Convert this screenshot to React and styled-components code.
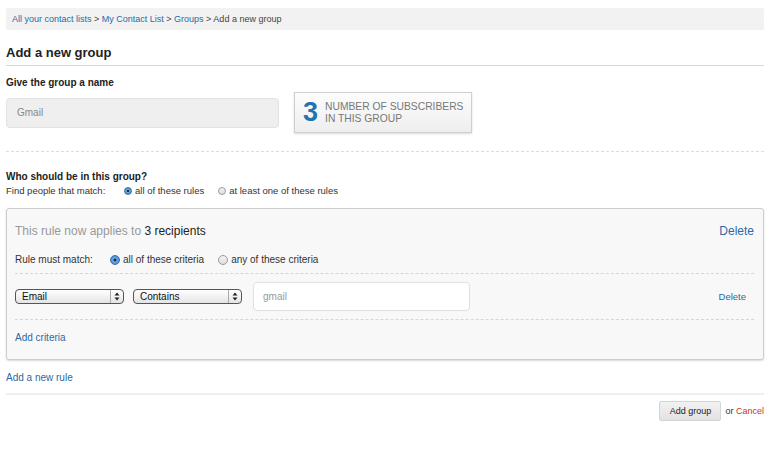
import React from "react";
import styled, { createGlobalStyle } from "styled-components";

const Global = createGlobalStyle`
  html, body { margin: 0; padding: 0; background: #fff; }
  body { font-family: "Liberation Sans", Arial, Helvetica, sans-serif; color: #222; }
`;

const Page = styled.div`
  padding: 8px 11px 0 6px;
`;

const Breadcrumb = styled.div`
  background: #f2f2f2;
  height: 22px;
  display: flex;
  align-items: center;
  padding-left: 6px;
  font-size: 9px;
  color: #444;
  border-radius: 2px;
`;

const Link = styled.a`
  color: ${(p) => (p.$danger ? "#c8342a" : "#2b6aa6")};
  text-decoration: none;
  font-size: ${(p) => p.$size || "inherit"};
  cursor: pointer;
`;

const Heading = styled.h1`
  margin: 15px 0 0;
  font-size: 13px;
  font-weight: bold;
  padding-bottom: 4px;
  border-bottom: 1px solid #d8d8d8;
  line-height: 16px;
`;

const Label = styled.div`
  font-size: 10px;
  font-weight: bold;
  margin-top: ${(p) => p.$mt || "0"};
  line-height: 12px;
`;

const NameRow = styled.div`
  display: flex;
  align-items: center;
  gap: 15px;
  margin-top: 3px;
`;

const NameInput = styled.div`
  width: 273px;
  height: 30px;
  box-sizing: border-box;
  background: #efefef;
  border: 1px solid #e2e2e2;
  border-radius: 4px;
  display: flex;
  align-items: center;
  padding-left: 10px;
  font-size: 10px;
  color: #888;
`;

const CountBox = styled.div`
  width: 178px;
  height: 41px;
  box-sizing: border-box;
  border: 1px solid #cfcfcf;
  background: linear-gradient(#fdfdfd, #eeeeee);
  box-shadow: 0 1px 2px rgba(0, 0, 0, 0.15);
  display: flex;
  align-items: center;
  padding-left: 8px;
  gap: 7px;
`;

const CountNum = styled.span`
  font-size: 27px;
  font-weight: bold;
  color: #1f74b2;
  line-height: 1;
`;

const CountText = styled.span`
  font-size: 10.3px;
  color: #777;
  text-transform: uppercase;
  line-height: 11.5px;
`;

const Dashed = styled.div`
  border-top: 1px dashed ${(p) => p.$color || "#d6d6d6"};
  margin: ${(p) => p.$m || "0"};
`;

const MatchRow = styled.div`
  display: flex;
  align-items: center;
  font-size: ${(p) => p.$size || "9.5px"};
  color: #333;
  margin-top: ${(p) => p.$mt || "0"};
  line-height: 12px;
`;

const MatchLabel = styled.span`
  width: ${(p) => p.$w};
`;

const RadioOption = styled.label`
  display: inline-flex;
  align-items: center;
  gap: 3px;
  margin-right: ${(p) => p.$mr || "0"};
`;

const RadioDot = styled.span`
  width: ${(p) => p.$s}px;
  height: ${(p) => p.$s}px;
  box-sizing: border-box;
  border-radius: 50%;
  border: 1px solid ${(p) => (p.$on ? "#3b6fa8" : "#9a9a9a")};
  background: ${(p) =>
    p.$on
      ? "radial-gradient(circle, #1d2a3a 0 22%, #6aa7e0 30%, #3c83cf 100%)"
      : "linear-gradient(#f4f4f4, #dedede)"};
  display: inline-block;
`;

const RuleBox = styled.div`
  margin-top: 11px;
  background: #f8f8f8;
  border: 1px solid #cdcdcd;
  border-radius: 3px;
  box-shadow: 0 1px 2px rgba(0, 0, 0, 0.15);
  padding: 0 9px 0 8px;
`;

const RuleHead = styled.div`
  display: flex;
  justify-content: space-between;
  align-items: center;
  height: 22px;
  margin-top: 11px;
  font-size: 12px;
`;

const Muted = styled.span`
  color: #999;
`;

const Strong = styled.span`
  color: #222;
`;

const CriteriaRow = styled.div`
  display: flex;
  align-items: center;
  height: 45px;
`;

const Select = styled.div`
  width: 109px;
  height: 15px;
  box-sizing: border-box;
  border: 1px solid #555;
  border-radius: 4px;
  background: linear-gradient(#ffffff, #e4e4e4);
  display: flex;
  align-items: center;
  font-size: 10px;
  color: #111;
  margin-right: ${(p) => p.$mr || "0"};
  overflow: hidden;
`;

const SelectText = styled.span`
  flex: 1;
  padding-left: 6px;
`;

const SelectArrows = styled.span`
  width: 12px;
  height: 100%;
  border-left: 1px solid #aaa;
  display: flex;
  align-items: center;
  justify-content: center;
`;

const ValueInput = styled.div`
  width: 217px;
  height: 29px;
  box-sizing: border-box;
  background: #fff;
  border: 1px solid #e0e0e0;
  border-radius: 4px;
  display: flex;
  align-items: center;
  padding-left: 9px;
  font-size: 10px;
  color: #999;
`;

const Spacer = styled.div`
  flex: 1;
`;

const SmallDelete = styled(Link)`
  font-size: 9.5px;
  margin-right: 8px;
`;

const AddCriteria = styled.div`
  height: 35px;
  padding-bottom: 4px;
  display: flex;
  align-items: center;
  font-size: 10px;
`;

const AddRule = styled.div`
  margin-top: 12px;
  font-size: 10px;
  line-height: 12px;
`;

const Footer = styled.div`
  margin-top: 9px;
  border-top: 2px solid #efefef;
  display: flex;
  justify-content: flex-end;
  align-items: center;
  padding-top: 6px;
  gap: 4px;
  font-size: 9px;
  color: #333;
`;

const Button = styled.button`
  width: 62px;
  height: 20px;
  font-family: inherit;
  font-size: 9px;
  color: #222;
  background: linear-gradient(#f2f2f2, #e2e2e2);
  border: 1px solid #d4d4d4;
  border-radius: 2px;
  padding: 0;
`;

const Radio = ({ on, size, mr, children }) => (
  <RadioOption $mr={mr}>
    <RadioDot $on={on} $s={size} />
    {children}
  </RadioOption>
);

const Arrows = () => (
  <svg width="6" height="9" viewBox="0 0 6 9">
    <path d="M3 0.5 L5.5 3.5 L0.5 3.5 Z M3 8.5 L5.5 5.5 L0.5 5.5 Z" fill="#222" />
  </svg>
);

export default function App() {
  return (
    <>
      <Global />
      <Page>
        <Breadcrumb>
          <Link>All your contact lists</Link>&nbsp;&gt;&nbsp;
          <Link>My Contact List</Link>&nbsp;&gt;&nbsp;
          <Link>Groups</Link>&nbsp;&gt; Add a new group
        </Breadcrumb>

        <Heading>Add a new group</Heading>

        <Label $mt="11px">Give the group a name</Label>
        <NameRow>
          <NameInput>Gmail</NameInput>
          <CountBox>
            <CountNum>3</CountNum>
            <CountText>
              Number of subscribers
              <br />
              in this group
            </CountText>
          </CountBox>
        </NameRow>

        <Dashed $m="18px 0 0" $color="#dcdcdc" />

        <Label $mt="19px">Who should be in this group?</Label>
        <MatchRow $mt="2px">
          <MatchLabel $w="118px">Find people that match:</MatchLabel>
          <Radio on size={8} mr="14px">all of these rules</Radio>
          <Radio size={8}>at least one of these rules</Radio>
        </MatchRow>

        <RuleBox>
          <RuleHead>
            <span>
              <Muted>This rule now applies to </Muted>
              <Strong>3 recipients</Strong>
            </span>
            <Link>Delete</Link>
          </RuleHead>
          <MatchRow $mt="12px" $size="10px">
            <MatchLabel $w="95px">Rule must match:</MatchLabel>
            <Radio on size={10} mr="14px">all of these criteria</Radio>
            <Radio size={10}>any of these criteria</Radio>
          </MatchRow>
          <Dashed $m="7px 0 0" />
          <CriteriaRow>
            <Select $mr="9px">
              <SelectText>Email</SelectText>
              <SelectArrows><Arrows /></SelectArrows>
            </Select>
            <Select $mr="11px">
              <SelectText>Contains</SelectText>
              <SelectArrows><Arrows /></SelectArrows>
            </Select>
            <ValueInput>gmail</ValueInput>
            <Spacer />
            <SmallDelete>Delete</SmallDelete>
          </CriteriaRow>
          <Dashed />
          <AddCriteria>
            <Link>Add criteria</Link>
          </AddCriteria>
        </RuleBox>

        <AddRule>
          <Link>Add a new rule</Link>
        </AddRule>

        <Footer>
          <Button>Add group</Button>
          <span>
            or <Link $danger>Cancel</Link>
          </span>
        </Footer>
      </Page>
    </>
  );
}
